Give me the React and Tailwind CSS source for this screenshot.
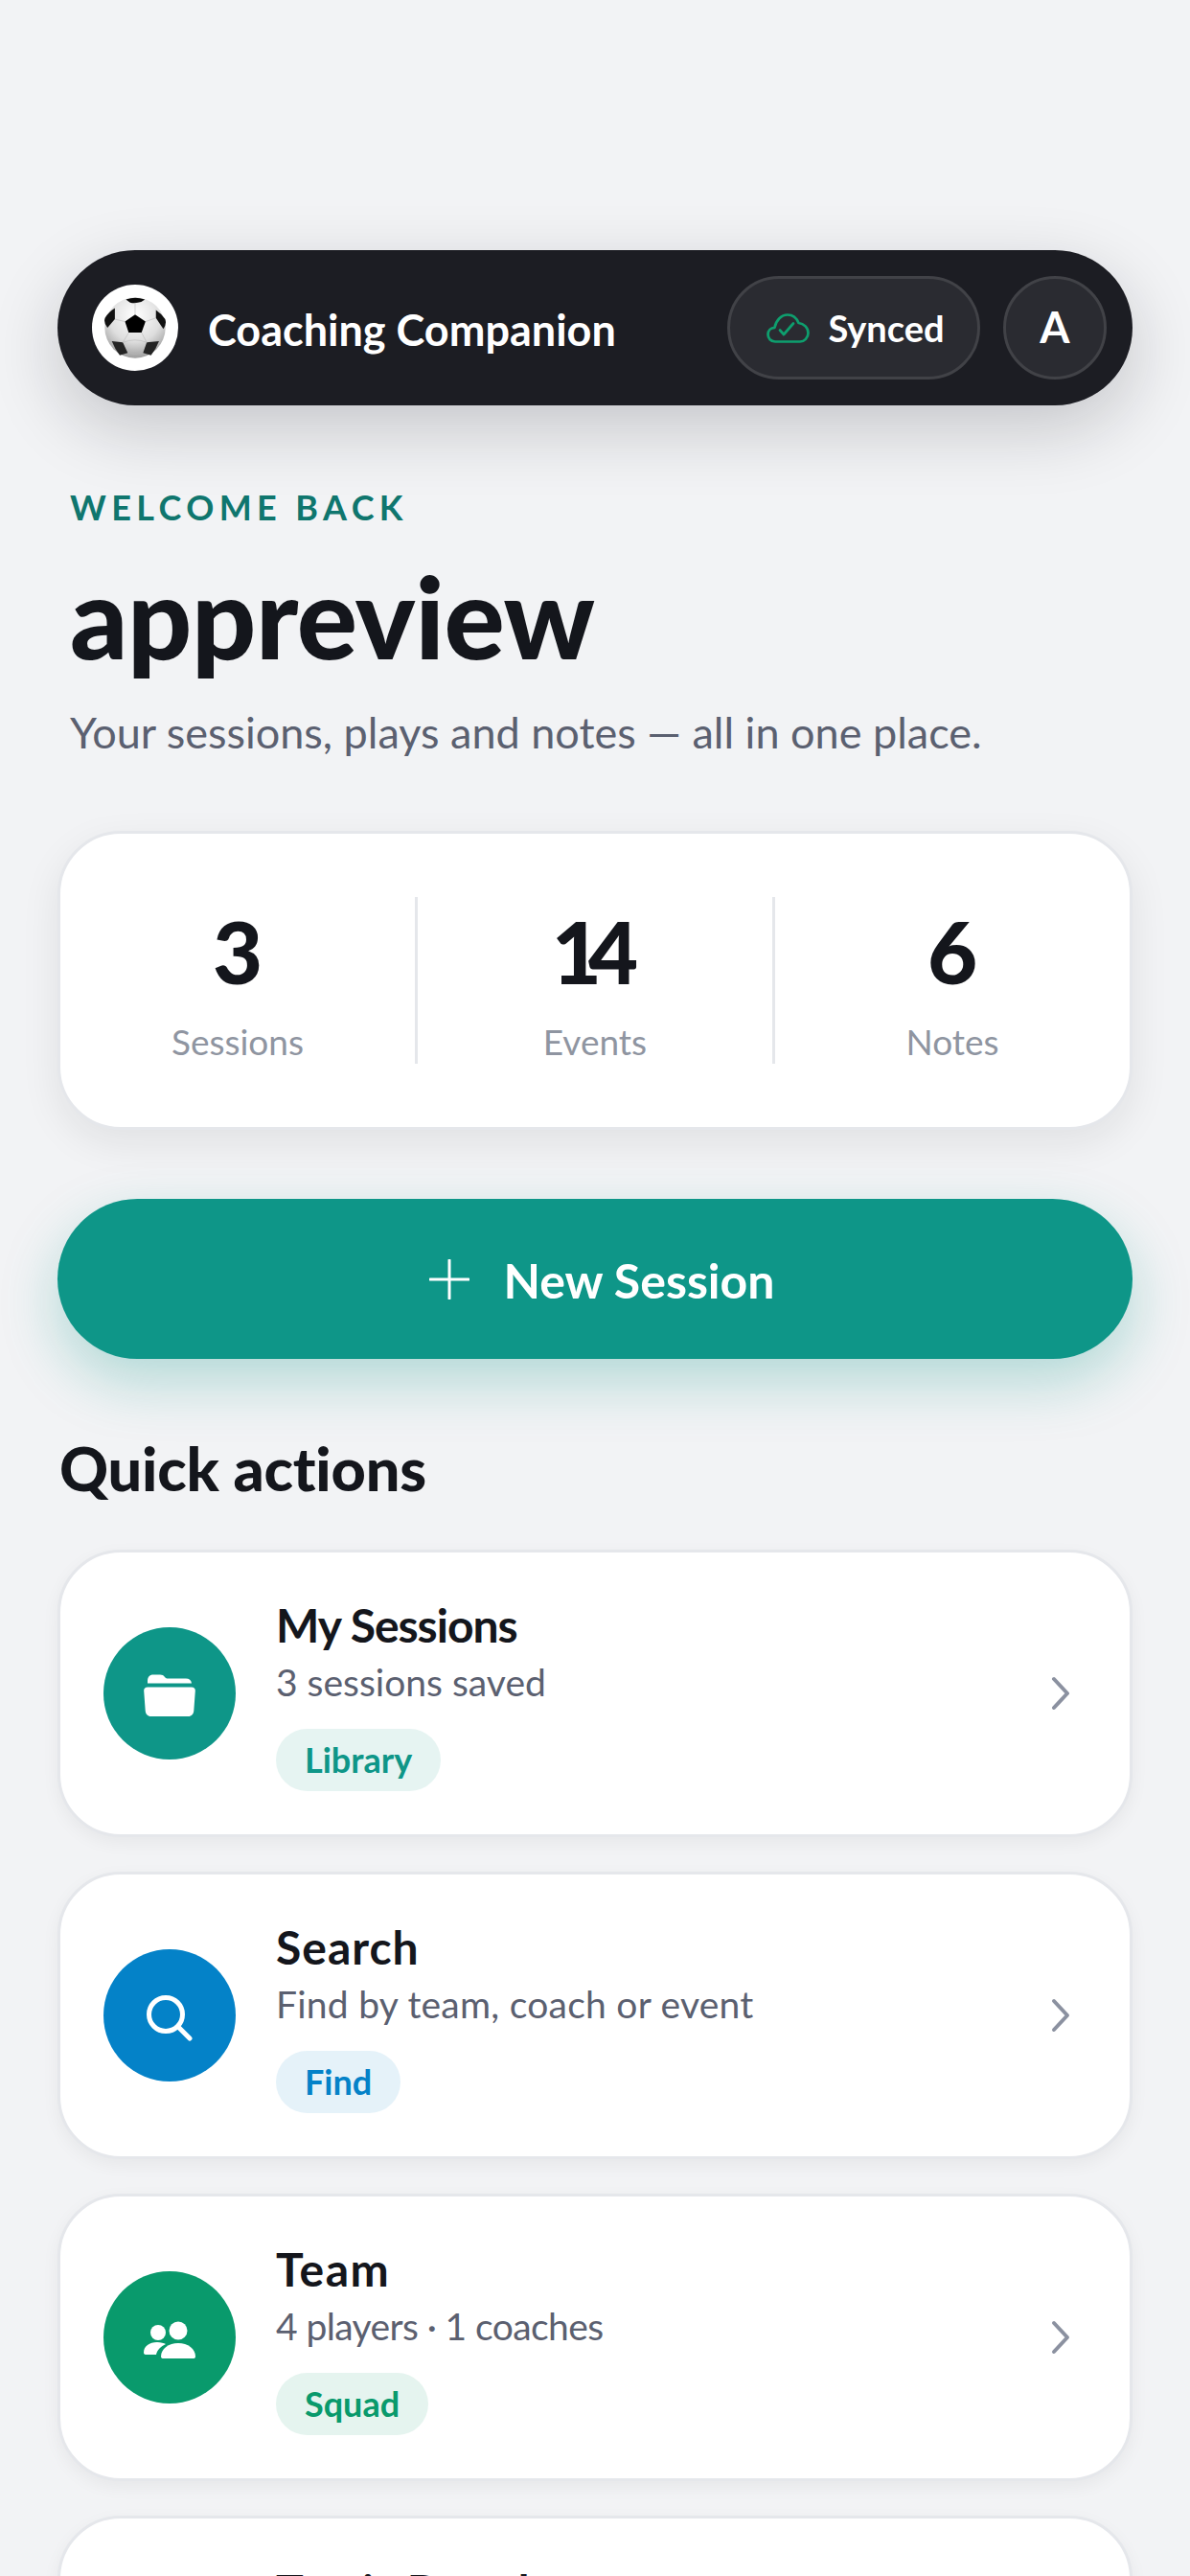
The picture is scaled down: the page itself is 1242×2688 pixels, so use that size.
const font = { fontFamily: '"Lato", "Noto Sans", sans-serif' };

function Ball() {
  return (
    <svg viewBox="0 0 100 100" className="w-[64px] h-[64px]">
      <defs>
        <radialGradient id="bg" cx="0.5" cy="0.3" r="0.78">
          <stop offset="0" stopColor="#ffffff" />
          <stop offset="0.55" stopColor="#dedede" />
          <stop offset="1" stopColor="#8a8a8a" />
        </radialGradient>
      </defs>
      <circle cx="50" cy="50" r="49.5" fill="url(#bg)" />
      <path d="M50 28.6 L67 40 L60.5 58 L39.5 58 L33.5 40 Z" fill="#000" />
      <path d="M35 4 Q50 -2 66 4 L60 8 Q50 11 42 9 Z" fill="#0a0a0a" />
      <path d="M17 18 L17 36 L5 50 Q-2 42 1 34 Q6 25 17 18 Z" fill="#111" />
      <path d="M84 21 L84 34 L96 52 Q102 44 99 36 Q93 27 84 21 Z" fill="#111" />
      <path d="M12 72 L30 74 L38 91 L25 95 Q17 85 12 72 Z" fill="#242424" />
      <path d="M89 72 L69 74 L63 91 L76 95 Q84 85 89 72 Z" fill="#242424" />
      <g stroke="#b5b5b5" strokeWidth="0.9" fill="none">
        <path d="M50 28.6 L50 9 M67 40 L84 34 M60.5 58 L69 74 M39.5 58 L30 74 M33.5 40 L17 36" />
        <path d="M30 74 Q50 66 69 74" />
        <path d="M38 91 Q50 95 63 91" />
      </g>
    </svg>
  );
}

function Cloud() {
  return (
    <svg viewBox="0 0 45 31" className="w-[45px] h-[31px]" fill="none" stroke="#0e9f6e" strokeWidth="2.7" strokeLinecap="round" strokeLinejoin="round">
      <path d="M9 29.5 C4.5 29.5 1.5 26 1.5 22 C1.5 18 4.5 15 8.5 14.8 C10 7 15.5 1.5 22 1.5 C27.5 1.5 31.5 5 33.5 10 C39 10.5 43.5 15 43.5 20.5 C43.5 25.5 39.5 29.5 35 29.5 Z" />
      <path d="M14 17.5 L18 22 L28 10.5" />
    </svg>
  );
}

function FolderIcon() {
  return (
    <svg viewBox="0 0 54 44" className="w-[54px] h-[44px] mt-[4px]" fill="#fff">
      <path d="M4 9.5 V7 C4 3 6 0.5 10 0.5 H17 C19.5 0.5 20.5 1.3 22 2.9 C23 4 24 4.5 25.5 4.5 H44 C47.5 4.5 49.5 6.3 50 9.5 Z" />
      <path d="M4 13.5 H50 C52.5 13.5 54 15 53.8 17.5 L52.3 38 C52 41.6 50 44 46.5 44 H7.5 C4 44 2 41.6 1.7 38 L0.2 17.5 C0 15 1.5 13.5 4 13.5 Z" />
    </svg>
  );
}

function SearchIcon() {
  return (
    <svg viewBox="0 0 48 48" className="w-[48px] h-[48px] mt-[6px]" fill="none" stroke="#fff" strokeWidth="5" strokeLinecap="round">
      <circle cx="20" cy="20" r="17.5" />
      <path d="M33 33 L45 45" />
    </svg>
  );
}

function TeamIcon() {
  return (
    <svg viewBox="0 0 54 40" className="w-[54px] h-[40px] mt-[6px]" fill="#fff">
      <circle cx="15" cy="12" r="8" />
      <circle cx="36" cy="10" r="9.5" />
      <path d="M0 33 C0 26 6 22 14 22 C18 22 21 23 23 24 C18 26.5 14 30 13 35 H3 C1 35 0 34.5 0 33 Z" />
      <path d="M18 37 C18 29 26 23 36 23 C46 23 54 29 54 37 C54 38.5 53 39 51.5 39 H20.5 C19 39 18 38.5 18 37 Z" />
    </svg>
  );
}

function Chevron() {
  return (
    <svg viewBox="0 0 20 36" className="w-[20px] h-[36px]" fill="none" stroke="#8b91a0" strokeWidth="4" strokeLinecap="round" strokeLinejoin="round">
      <path d="M3 3 L17 18 L3 33" />
    </svg>
  );
}

const actions = [
  { title: "My Sessions", sub: "3 sessions saved", chip: "Library", color: "bg-[#0e9688]", chipBg: "bg-[#e6f4f2]", chipText: "text-[#0e9688]", titleT: "tracking-[-1px]", subT: "", icon: <FolderIcon /> },
  { title: "Search", sub: "Find by team, coach or event", chip: "Find", color: "bg-[#0482c8]", chipBg: "bg-[#e5f2f9]", chipText: "text-[#0482c8]", titleT: "tracking-[1px]", subT: "tracking-[0.25px]", icon: <SearchIcon /> },
  { title: "Team", sub: "4 players · 1 coaches", chip: "Squad", color: "bg-[#099a6c]", chipBg: "bg-[#e5f4ef]", chipText: "text-[#099a6c]", titleT: "tracking-[1.5px]", subT: "tracking-[-0.6px]", icon: <TeamIcon /> },
  { title: "Tactic Board", sub: "Draw plays and drills", chip: "Plays", color: "bg-[#7c3aed]", chipBg: "bg-[#f0ebfd]", chipText: "text-[#7c3aed]", titleT: "", subT: "", icon: <FolderIcon /> },
];

function ActionCard({ a }) {
  return (
    <div className="flex items-center h-[300px] shrink-0 rounded-[66px] bg-white border-[3px] border-[#e5e7eb] pl-[45px] pr-[62px] shadow-[0_6px_18px_rgba(20,22,28,0.05)]">
      <div className={`w-[138px] h-[138px] rounded-full flex items-center justify-center shrink-0 ${a.color}`}>{a.icon}</div>
      <div className="ml-[42px] flex-1 flex flex-col items-start">
        <div className={`text-[48px] leading-[60px] font-bold text-[#14161c] ${a.titleT}`}>{a.title}</div>
        <div className={`mt-[3px] text-[39px] leading-[52px] text-[#5b6070] ${a.subT}`}>{a.sub}</div>
        <div className={`mt-[23px] h-[65px] rounded-full px-[30px] flex items-center text-[36px] font-bold ${a.chipBg} ${a.chipText}`}>{a.chip}</div>
      </div>
      <Chevron />
    </div>
  );
}

function Stat({ n, label, divider }) {
  return (
    <div className={`flex-1 h-[174px] flex flex-col items-center ${divider ? "border-r-[3px] border-[#e5e7eb]" : ""}`}>
      <div className="text-[90px] leading-[100px] font-black text-[#14161c] mt-[6px]">{n}</div>
      <div className="text-[37px] leading-[44px] text-[#8f95a1] mt-[23px]">{label}</div>
    </div>
  );
}

export default function App() {
  return (
    <div style={font} className="w-[1242px] h-[2688px] overflow-hidden bg-[#f2f3f5] flex flex-col px-[60px] pt-[261px]">
      <header className="h-[162px] shrink-0 rounded-full bg-[#1c1d23] flex items-center pl-[36px] pr-[27px] shadow-[0_24px_72px_rgba(20,22,28,0.2)]">
        <div className="w-[90px] h-[90px] rounded-full bg-white flex items-center justify-center shrink-0"><Ball /></div>
        <div className="ml-[31px] pt-[5px] flex-1 text-[45px] font-bold text-white">Coaching Companion</div>
        <div className="h-[108px] w-[264px] rounded-full bg-[#2a2b31] border-[3px] border-[#414247] flex items-center justify-center gap-[19px] pl-[4px]">
          <Cloud />
          <span className="text-[38px] font-bold text-white">Synced</span>
        </div>
        <div className="ml-[24px] w-[108px] h-[108px] rounded-full bg-[#2a2b31] border-[3px] border-[#414247] flex items-center justify-center text-[45px] font-bold text-white">A</div>
      </header>

      <div className="pl-[13px] mt-[84px] text-[36px] leading-[44px] font-bold tracking-[0.15em] text-[#0f766e]">WELCOME BACK</div>
      <h1 className="pl-[13px] mt-[32px] text-[118px] leading-[120px] font-black tracking-[-0.4px] text-[#14161c]">appreview</h1>
      <p className="pl-[13px] mt-[33px] text-[45px] leading-[56px] text-[#5b6070]">Your sessions, plays and notes — all in one place.</p>

      <section className="mt-[75px] h-[312px] shrink-0 rounded-[66px] bg-white border-[3px] border-[#e5e7eb] flex items-center shadow-[0_14px_40px_rgba(20,22,28,0.08)]">
        <Stat n="3" label="Sessions" divider />
        <Stat n={<><span className="tracking-[-14px]">1</span>4</>} label="Events" divider />
        <Stat n="6" label="Notes" />
      </section>

      <button className="mt-[72px] h-[167px] shrink-0 rounded-full bg-[#0e9688] flex items-center justify-center gap-[36px] pl-[14px] text-white shadow-[0_24px_60px_rgba(14,150,136,0.28)]">
        <svg viewBox="0 0 42 42" className="w-[42px] h-[42px]" stroke="#fff" strokeWidth="3" strokeLinecap="round"><path d="M21 1 V41 M1 21 H41" /></svg>
        <span className="text-[50px] font-bold pt-[3px]">New Session</span>
      </button>

      <h2 className="mt-[78px] pl-[2px] text-[63px] leading-[72px] font-black tracking-[-0.2px] text-[#14161c]">Quick actions</h2>

      <div className="mt-[49px] flex flex-col gap-[36px]">
        {actions.map((a) => <ActionCard key={a.title} a={a} />)}
      </div>
    </div>
  );
}
